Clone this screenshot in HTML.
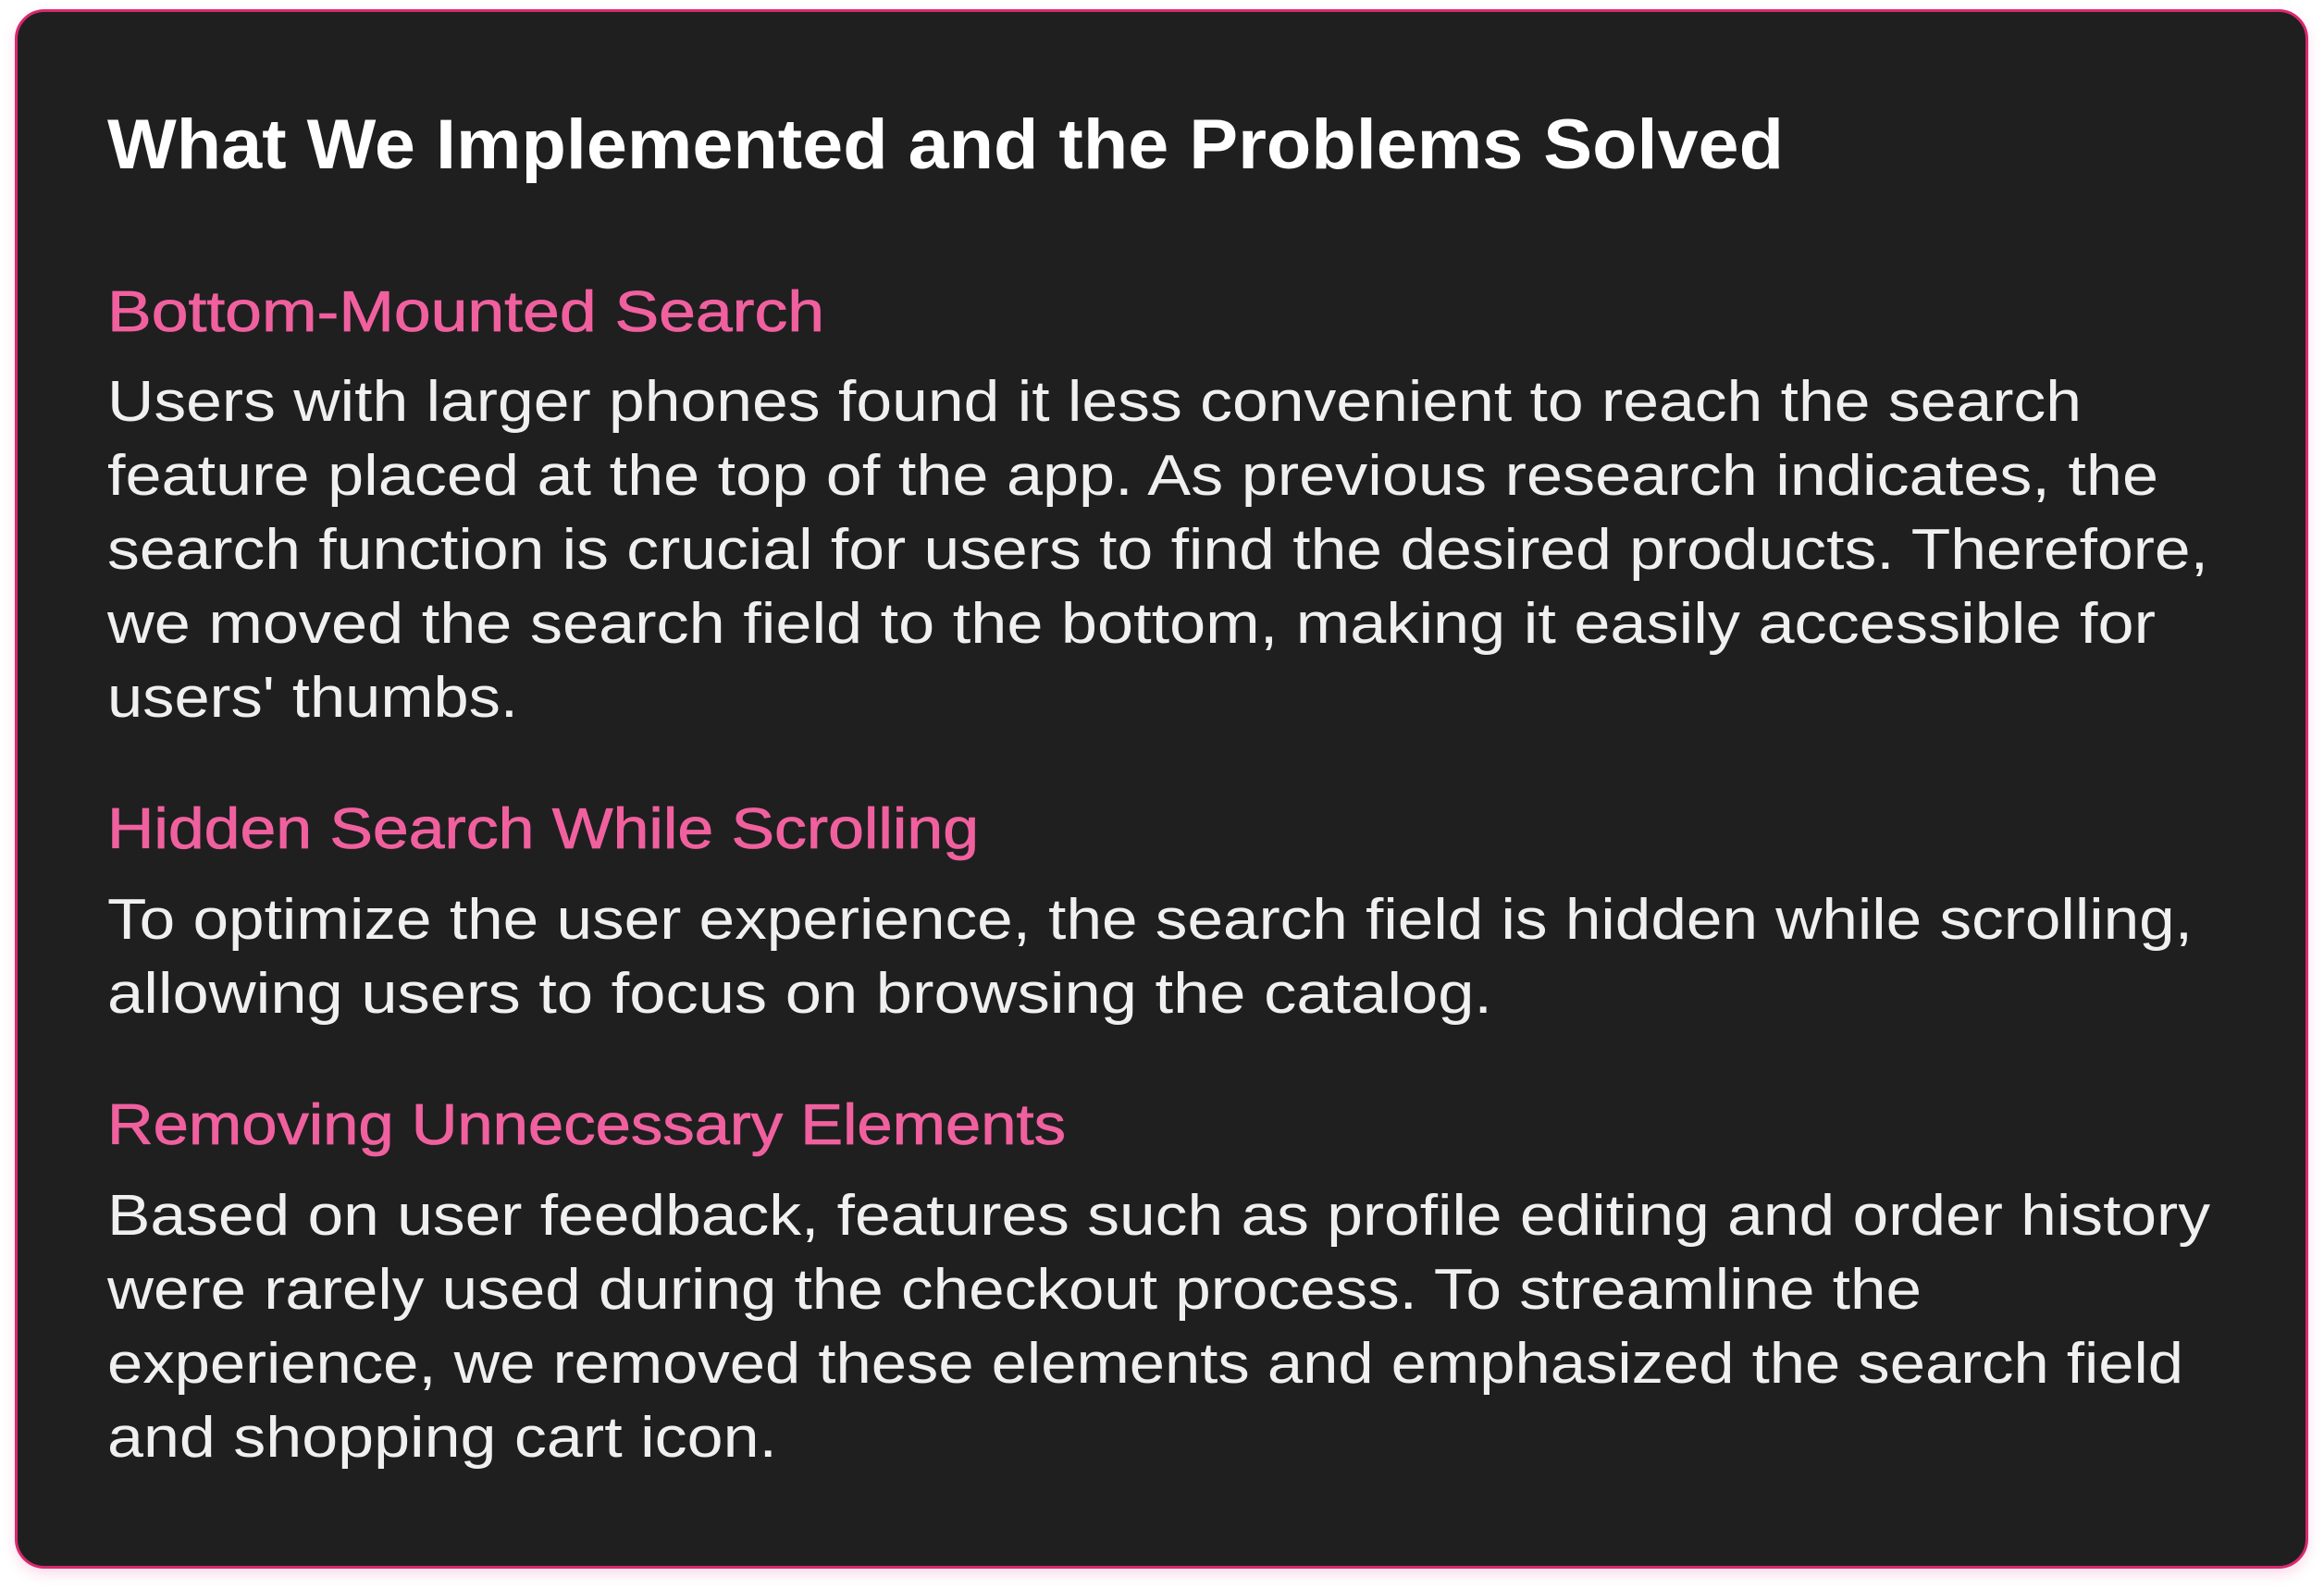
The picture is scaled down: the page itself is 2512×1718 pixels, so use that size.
<!DOCTYPE html>
<html><head><meta charset="utf-8">
<style>
html,body{margin:0;padding:0;background:#fff;width:2512px;height:1718px;overflow:hidden}
.card{position:absolute;left:16px;top:10px;width:2479px;height:1686px;box-sizing:border-box;background:#1f1f1f;border:3px solid #d9296f;border-radius:32px;box-shadow:0 6px 14px rgba(230,60,140,0.18)}
svg{position:absolute;left:0;top:0}
text{font-family:"Liberation Sans",sans-serif}
.t{font-size:76px;font-weight:bold;fill:#ffffff}
.h{font-size:62px;fill:#f0609e;stroke:#f0609e;stroke-width:0.8}
.b{font-size:62px;fill:#f0f0f0}
</style></head><body>
<div class="card"></div>
<svg width="2512" height="1718" xmlns="http://www.w3.org/2000/svg">
<text class="t" x="116" y="182" textLength="1812" lengthAdjust="spacingAndGlyphs">What We Implemented and the Problems Solved</text>
<text class="h" x="116" y="358" textLength="775" lengthAdjust="spacingAndGlyphs">Bottom-Mounted Search</text>
<text class="b" x="116" y="455" textLength="2134" lengthAdjust="spacingAndGlyphs">Users with larger phones found it less convenient to reach the search</text>
<text class="b" x="116" y="535" textLength="2217" lengthAdjust="spacingAndGlyphs">feature placed at the top of the app. As previous research indicates, the</text>
<text class="b" x="116" y="615" textLength="2271" lengthAdjust="spacingAndGlyphs">search function is crucial for users to find the desired products. Therefore,</text>
<text class="b" x="116" y="695" textLength="2214" lengthAdjust="spacingAndGlyphs">we moved the search field to the bottom, making it easily accessible for</text>
<text class="b" x="116" y="775" textLength="444" lengthAdjust="spacingAndGlyphs">users' thumbs.</text>
<text class="h" x="116" y="917" textLength="942" lengthAdjust="spacingAndGlyphs">Hidden Search While Scrolling</text>
<text class="b" x="116" y="1015" textLength="2254" lengthAdjust="spacingAndGlyphs">To optimize the user experience, the search field is hidden while scrolling,</text>
<text class="b" x="116" y="1095" textLength="1497" lengthAdjust="spacingAndGlyphs">allowing users to focus on browsing the catalog.</text>
<text class="h" x="116" y="1237" textLength="1036" lengthAdjust="spacingAndGlyphs">Removing Unnecessary Elements</text>
<text class="b" x="116" y="1335" textLength="2273" lengthAdjust="spacingAndGlyphs">Based on user feedback, features such as profile editing and order history</text>
<text class="b" x="116" y="1415" textLength="1961" lengthAdjust="spacingAndGlyphs">were rarely used during the checkout process. To streamline the</text>
<text class="b" x="116" y="1495" textLength="2244" lengthAdjust="spacingAndGlyphs">experience, we removed these elements and emphasized the search field</text>
<text class="b" x="116" y="1575" textLength="724" lengthAdjust="spacingAndGlyphs">and shopping cart icon.</text>
</svg>
</body></html>
